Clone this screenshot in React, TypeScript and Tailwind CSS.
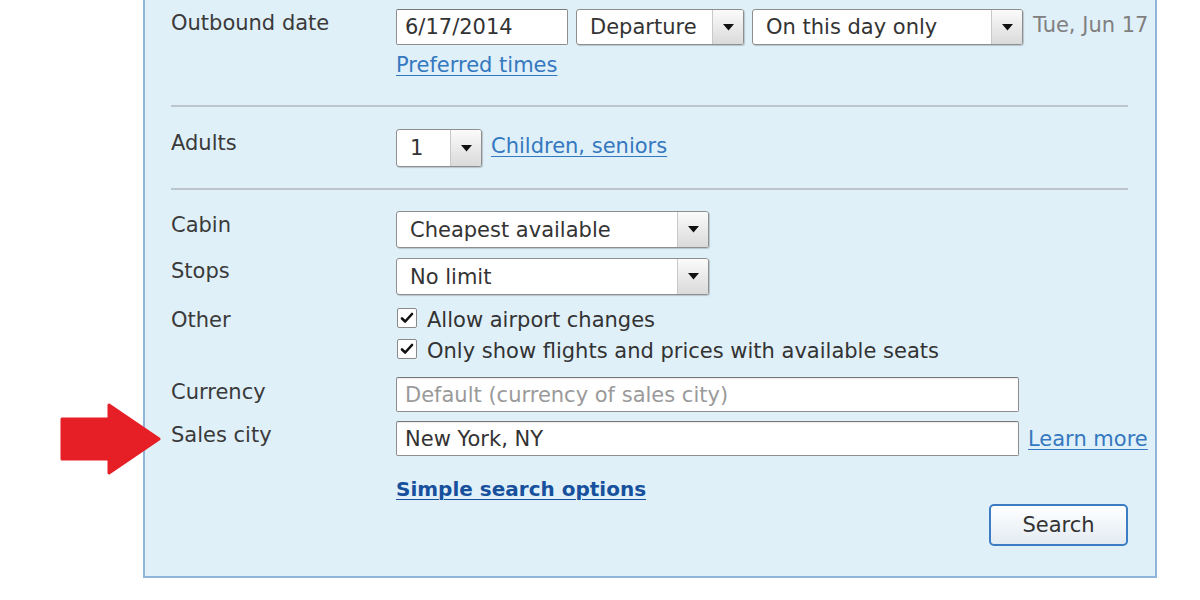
import React from 'react';

const Caret = () => (
  <svg width="11" height="7" viewBox="0 0 11 7">
    <polygon points="0,0 11,0 5.5,6.5" fill="#111" />
  </svg>
);

const Select = ({ value, width, height = 37 }: { value: string; width: number; height?: number }) => (
  <div
    className="shrink-0 flex bg-white border border-[#8e8e8e] rounded-[3px] shadow-[1px_1px_1px_rgba(0,0,0,0.18)] overflow-hidden"
    style={{ width, height }}
  >
    <div className="flex-1 flex items-center pl-[13px] text-[#333]">{value}</div>
    <div className="w-[31px] flex items-center justify-center border-l border-[#c8c8c8] bg-gradient-to-b from-[#fbfbfb] to-[#dadada]">
      <Caret />
    </div>
  </div>
);

const Field = ({ value, width, placeholder }: { value?: string; width: number; placeholder?: string }) => (
  <div
    className="shrink-0 h-[35px] flex items-center pl-[8px] bg-white border border-[#8e8e8e] border-t-[#777] rounded-[2px] shadow-[inset_0_1px_1px_rgba(0,0,0,0.08)]"
    style={{ width }}
  >
    {value ? (
      <span className="text-[#333]">{value}</span>
    ) : (
      <span className="text-[#9a9a9a]">{placeholder}</span>
    )}
  </div>
);

const Check = ({ children, className = '' }: { children: React.ReactNode; className?: string }) => (
  <div className={`flex items-start h-[24px] ${className}`}>
    <div className="shrink-0 w-[20px] h-[20px] bg-white border border-[#8a8a8a] rounded-[2px] flex items-center justify-center">
      <svg width="14" height="12" viewBox="0 0 14 12">
        <path d="M2 6.5 L5.2 9.5 L12 2" stroke="#111" strokeWidth="2.6" fill="none" strokeLinecap="round" strokeLinejoin="round" />
      </svg>
    </div>
    <span className="ml-[10px] text-[#333] whitespace-nowrap">{children}</span>
  </div>
);

const Link = ({ children, className = '' }: { children: React.ReactNode; className?: string }) => (
  <span className={`text-[#3478c0] underline underline-offset-[3px] decoration-1 whitespace-nowrap ${className}`}>{children}</span>
);

const Label = ({ children, className = '' }: { children: React.ReactNode; className?: string }) => (
  <div className={`w-[225px] shrink-0 text-[#3a3a3a] ${className}`}>{children}</div>
);

export default function App() {
  return (
    <div className="relative w-[1200px] h-[600px] bg-white overflow-hidden font-['DejaVu_Sans',_'Verdana',_sans-serif] text-[21px] leading-[24px]">
      <div className="ml-[143px] w-[1014px] h-[578px] bg-[#e0f0f9] border-l-2 border-r-2 border-b-2 border-[#8fb5db] pl-[26px] pr-[27px] flex flex-col">
        {/* outbound date */}
        <div className="flex pt-[9px]">
          <Label className="pt-[2px]">Outbound date</Label>
          <div className="flex flex-col">
            <div className="flex items-start gap-[8px]">
              <div className="shrink-0 w-[172px] h-[36px] flex items-center pl-[8px] bg-white border border-[#8e8e8e] border-t-[#777] rounded-[2px] text-[#333]">
                6/17/2014
              </div>
              <Select value="Departure" width={168} height={36} />
              <Select value="On this day only" width={271} height={36} />
              <span className="shrink-0 ml-[2px] pt-[4px] text-[#808080] whitespace-nowrap">Tue, Jun 17</span>
            </div>
            <Link className="mt-[8px] self-start">Preferred times</Link>
          </div>
        </div>

        <div className="mt-[28px] h-[2px] bg-[#bcc5cb]" />

        {/* adults */}
        <div className="flex mt-[22px]">
          <Label className="pt-[2px]">Adults</Label>
          <div className="flex items-start gap-[9px]">
            <Select value="1" width={86} height={38} />
            <Link className="pt-[5px]">Children, seniors</Link>
          </div>
        </div>

        <div className="mt-[21px] h-[2px] bg-[#bcc5cb]" />

        {/* cabin / stops */}
        <div className="flex mt-[21px]">
          <Label className="pt-[2px]">Cabin</Label>
          <Select value="Cheapest available" width={313} />
        </div>
        <div className="flex mt-[10px]">
          <Label className="pt-[1px]">Stops</Label>
          <Select value="No limit" width={313} />
        </div>

        {/* other */}
        <div className="flex mt-[13px]">
          <Label>Other</Label>
          <div className="flex flex-col gap-[6px] pl-[1px]">
            <Check>Allow airport changes</Check>
            <Check className="pt-[1px]">Only show flights and prices with available seats</Check>
          </div>
        </div>

        {/* currency / sales city */}
        <div className="flex mt-[15px]">
          <Label className="pt-[3px]">Currency</Label>
          <Field placeholder="Default (currency of sales city)" width={623} />
        </div>
        <div className="flex mt-[9px]">
          <Label className="pt-[2px]">Sales city</Label>
          <div className="flex items-start gap-[9px]">
            <Field value="New York, NY" width={623} />
            <Link className="pt-[6px]">Learn more</Link>
          </div>
        </div>

        <div className="flex mt-[21px] pl-[225px]">
          <span className="text-[20px] font-bold text-[#17509c] underline underline-offset-[3px] decoration-1">
            Simple search options
          </span>
        </div>

        <div className="flex justify-end mt-[3px]">
          <button className="w-[139px] h-[42px] border-2 border-[#3b7cc3] rounded-[5px] bg-gradient-to-b from-white to-[#e3ebf2] text-[#333] text-[21px] leading-[24px] font-['DejaVu_Sans',_sans-serif]">
            Search
          </button>
        </div>
      </div>

      {/* red annotation arrow */}
      <svg className="absolute left-[60px] top-[403px]" width="102" height="72" viewBox="0 0 102 72">
        <polygon
          points="2,16 49,16 49,2 99,36 49,70 49,56 2,56"
          fill="#e61e26"
          stroke="#e61e26"
          strokeWidth="3"
          strokeLinejoin="round"
        />
      </svg>
    </div>
  );
}
